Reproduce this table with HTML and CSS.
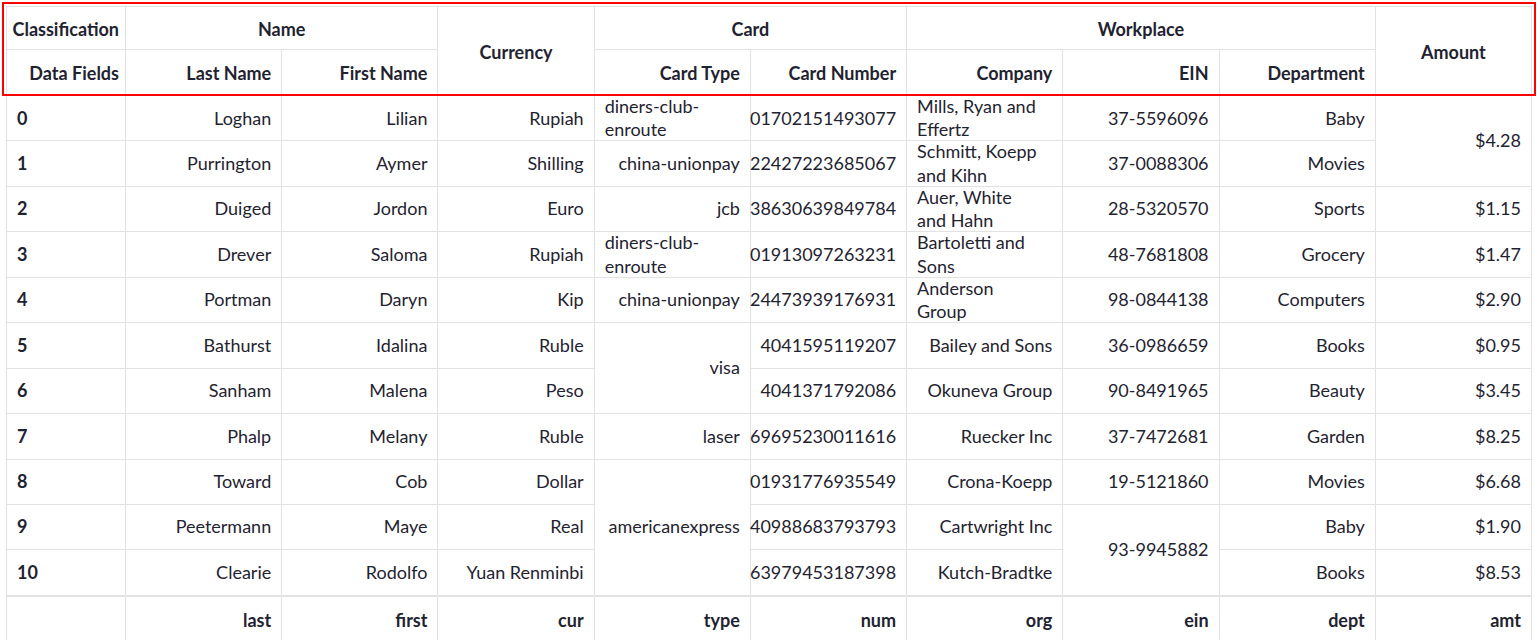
FILE: index.html
```html
<!DOCTYPE html>
<html lang="en">
<head>
<meta charset="utf-8">
<title>Grid</title>
<link rel="stylesheet" href="styles.css">
</head>
<body>
<div class="grid">
  <div class="c h first">Classification</div>
  <div class="c h mid span2c">Name</div>
  <div class="c h mid span2r">Currency</div>
  <div class="c h mid span2c">Card</div>
  <div class="c h mid span3c">Workplace</div>
  <div class="c h mid span2r">Amount</div>

  <div class="c h first">Data Fields</div>
  <div class="c h">Last Name</div>
  <div class="c h">First Name</div>
  <div class="c h">Card Type</div>
  <div class="c h">Card Number</div>
  <div class="c h">Company</div>
  <div class="c h">EIN</div>
  <div class="c h">Department</div>

  <div class="c idx">0</div><div class="c">Loghan</div><div class="c">Lilian</div><div class="c">Rupiah</div><div class="c">diners-club-enroute</div><div class="c">01702151493077</div><div class="c">Mills, Ryan and Effertz</div><div class="c">37-5596096</div><div class="c">Baby</div><div class="c span2r">$4.28</div>
  <div class="c idx">1</div><div class="c">Purrington</div><div class="c">Aymer</div><div class="c">Shilling</div><div class="c">china-unionpay</div><div class="c">22427223685067</div><div class="c">Schmitt, Koepp and Kihn</div><div class="c">37-0088306</div><div class="c">Movies</div>
  <div class="c idx">2</div><div class="c">Duiged</div><div class="c">Jordon</div><div class="c">Euro</div><div class="c">jcb</div><div class="c">38630639849784</div><div class="c wrap">Auer, White<br>and Hahn</div><div class="c">28-5320570</div><div class="c">Sports</div><div class="c">$1.15</div>
  <div class="c idx">3</div><div class="c">Drever</div><div class="c">Saloma</div><div class="c">Rupiah</div><div class="c">diners-club-enroute</div><div class="c">01913097263231</div><div class="c">Bartoletti and Sons</div><div class="c">48-7681808</div><div class="c">Grocery</div><div class="c">$1.47</div>
  <div class="c idx">4</div><div class="c">Portman</div><div class="c">Daryn</div><div class="c">Kip</div><div class="c">china-unionpay</div><div class="c">24473939176931</div><div class="c wrap">Anderson<br>Group</div><div class="c">98-0844138</div><div class="c">Computers</div><div class="c">$2.90</div>
  <div class="c idx">5</div><div class="c">Bathurst</div><div class="c">Idalina</div><div class="c">Ruble</div><div class="c span2r">visa</div><div class="c">4041595119207</div><div class="c">Bailey and Sons</div><div class="c">36-0986659</div><div class="c">Books</div><div class="c">$0.95</div>
  <div class="c idx">6</div><div class="c">Sanham</div><div class="c">Malena</div><div class="c">Peso</div><div class="c">4041371792086</div><div class="c">Okuneva Group</div><div class="c">90-8491965</div><div class="c">Beauty</div><div class="c">$3.45</div>
  <div class="c idx">7</div><div class="c">Phalp</div><div class="c">Melany</div><div class="c">Ruble</div><div class="c">laser</div><div class="c">69695230011616</div><div class="c">Ruecker Inc</div><div class="c">37-7472681</div><div class="c">Garden</div><div class="c">$8.25</div>
  <div class="c idx">8</div><div class="c">Toward</div><div class="c">Cob</div><div class="c">Dollar</div><div class="c span3r">americanexpress</div><div class="c">01931776935549</div><div class="c">Crona-Koepp</div><div class="c">19-5121860</div><div class="c">Movies</div><div class="c">$6.68</div>
  <div class="c idx">9</div><div class="c">Peetermann</div><div class="c">Maye</div><div class="c">Real</div><div class="c">40988683793793</div><div class="c">Cartwright Inc</div><div class="c span2r">93-9945882</div><div class="c">Baby</div><div class="c">$1.90</div>
  <div class="c idx">10</div><div class="c">Clearie</div><div class="c">Rodolfo</div><div class="c">Yuan Renminbi</div><div class="c">63979453187398</div><div class="c">Kutch-Bradtke</div><div class="c">Books</div><div class="c">$8.53</div>

  <div class="c f"></div><div class="c f">last</div><div class="c f">first</div><div class="c f">cur</div><div class="c f">type</div><div class="c f">num</div><div class="c f">org</div><div class="c f">ein</div><div class="c f">dept</div><div class="c f">amt</div>
</div>
<div class="highlight"></div>
</body>
</html>
```

FILE: styles.css
```css
html, body {
  margin: 0;
  padding: 0;
  background: #ffffff;
}

body {
  padding: 6px 5px 0 6px;
  font-family: Lato, "Open Sans", sans-serif;
  font-size: 18px;
  color: #1f2330;
}

.grid {
  display: grid;
  grid-template-columns: 119px repeat(9, 1fr);
  grid-template-rows: 43px 46px repeat(11, 45.45px) 46px;
  border-left: 1px solid #e2e2e2;
  border-top: 1px solid #e2e2e2;
  background: #fff;
}

.c {
  display: flex;
  align-items: center;
  justify-content: flex-end;
  padding: 0 10px;
  border-right: 1px solid #e2e2e2;
  border-bottom: 1px solid #e2e2e2;
  line-height: 23.4px;
  min-width: 0;
  overflow: visible;
  white-space: normal;
}

.h {
  font-weight: 700;
  padding-top: 3px;
}

.h.first {
  padding-right: 6px;
}

.mid {
  justify-content: center;
}

.idx {
  justify-content: flex-start;
  font-weight: 700;
}

.wrap {
  justify-content: flex-start;
}

.f {
  font-weight: 700;
  padding-top: 4px;
  border-top: 1px solid #e2e2e2;
}

.span2c { grid-column: span 2; }
.span3c { grid-column: span 3; }
.span2r { grid-row: span 2; }
.span3r { grid-row: span 3; }

.highlight {
  position: absolute;
  left: 2px;
  top: 2px;
  width: 1534px;
  height: 94px;
  box-sizing: border-box;
  border: 2px solid #ff0000;
  pointer-events: none;
}
```
